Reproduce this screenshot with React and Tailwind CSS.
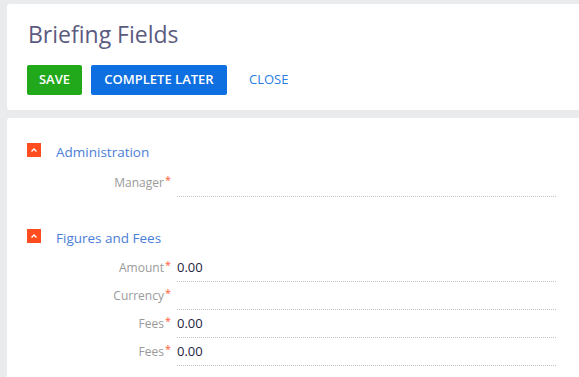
import React from 'react';

const font = { fontFamily: '"Open Sans", "Segoe UI", sans-serif' };

const Caret = () => (
  <span className="flex h-[14px] w-[14px] items-center justify-center bg-[#ff4d1f]">
    <svg width="8" height="6" viewBox="0 0 8 6" fill="none">
      <polyline points="1.5,4.5 4,2 6.5,4.5" stroke="#fff" strokeWidth="1.4" />
    </svg>
  </span>
);

const Section = ({ title }) => (
  <div className="flex h-[14px] items-center pl-[20px]">
    <Caret />
    <span className="ml-[15px] translate-y-[2px] text-[13.5px] leading-[14px] text-[#4b7ed8]">{title}</span>
  </div>
);

const Field = ({ label, value }) => (
  <div className="flex h-[28px]">
    <div className="flex w-[164px] items-center justify-end text-[12px] text-[#9a9a9a]">
      {label}
      <span className="ml-[1px] -mt-[6px] text-[11px] text-[#ff5a36]">*</span>
    </div>
    <div className="ml-[6px] flex w-[379px] items-center border-b border-dotted border-[#c4c4c4] text-[13px] text-[#23233f]">
      {value}
    </div>
  </div>
);

export default function App() {
  return (
    <div style={font} className="h-[377px] w-[579px] overflow-hidden bg-[#e9ebec] pl-[7px] pt-[4px]">
      <div className="h-[106px] rounded-l-[3px] bg-white pl-[20px] pt-[14px]">
        <h1 className="pl-[1px] text-[23px] leading-[32px] text-[#5b5b80]">Briefing Fields</h1>
        <div className="mt-[15px] flex items-center">
          <button className="h-[30px] w-[55px] rounded-[2px] bg-[#21a91b] text-[13px] font-semibold text-white">
            SAVE
          </button>
          <button className="ml-[9px] h-[30px] w-[136px] rounded-[2px] bg-[#0d6fe0] text-[13px] font-semibold text-white">
            COMPLETE LATER
          </button>
          <button className="ml-[22px] text-[13px] text-[#2b7de1]">CLOSE</button>
        </div>
      </div>
      <div className="mt-[8px] h-[300px] rounded-tl-[3px] bg-white pt-[25px]">
        <Section title="Administration" />
        <div className="mt-[12px]">
          <Field label="Manager" value="" />
        </div>
        <div className="mt-[32px]">
          <Section title="Figures and Fees" />
        </div>
        <div className="mt-[11px]">
          <Field label="Amount" value="0.00" />
          <Field label="Currency" value="" />
          <Field label="Fees" value="0.00" />
          <Field label="Fees" value="0.00" />
        </div>
      </div>
    </div>
  );
}
